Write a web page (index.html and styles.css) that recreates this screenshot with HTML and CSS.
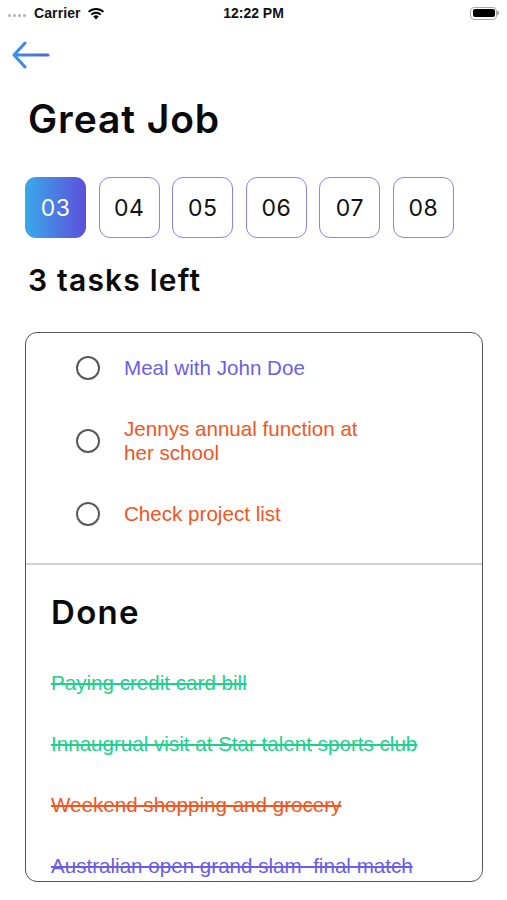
FILE: index.html
```html
<!DOCTYPE html>
<html>
<head>
<meta charset="utf-8">
<link rel="stylesheet" href="styles.css">
</head>
<body>
<div class="screen">
  <div class="status">
    <div class="status-left">
      <span class="dots"><i></i><i></i><i></i><i></i></span>
      <span class="carrier">Carrier</span>
      <svg class="wifi" width="18" height="13" viewBox="0 0 18 13">
        <path d="M9 12.5 L6.3 9.6 A4 4 0 0 1 11.7 9.6 Z" fill="#000"/>
        <path d="M4.3 7.6 A6.8 6.8 0 0 1 13.7 7.6" stroke="#000" stroke-width="2" fill="none"/>
        <path d="M1.6 4.9 A10.6 10.6 0 0 1 16.4 4.9" stroke="#000" stroke-width="2" fill="none"/>
      </svg>
    </div>
    <div class="time">12:22 PM</div>
    <div class="status-right">
      <span class="battery"><span class="battery-fill"></span></span><span class="battery-tip"></span>
    </div>
  </div>

  <div class="nav">
    <svg class="back" width="38" height="28" viewBox="0 0 38 28">
      <defs>
        <linearGradient id="ag" x1="0" y1="0" x2="1" y2="0">
          <stop offset="0" stop-color="#3a93e6"/>
          <stop offset="1" stop-color="#5663d6"/>
        </linearGradient>
      </defs>
      <path d="M13 2 L2 14 L13 26 M2 14 H36" stroke="url(#ag)" stroke-width="3" fill="none" stroke-linecap="round" stroke-linejoin="round"/>
    </svg>
  </div>

  <h1 class="title">Great Job</h1>

  <div class="dates">
    <div class="date active">03</div>
    <div class="date">04</div>
    <div class="date">05</div>
    <div class="date">06</div>
    <div class="date">07</div>
    <div class="date">08</div>
  </div>

  <h2 class="subtitle">3 tasks left</h2>

  <div class="card">
    <div class="todo">
      <div class="task">
        <span class="radio"></span>
        <span class="task-text purple">Meal with John Doe</span>
      </div>
      <div class="task">
        <span class="radio"></span>
        <span class="task-text orange">Jennys annual function at her school</span>
      </div>
      <div class="task">
        <span class="radio"></span>
        <span class="task-text orange">Check project list</span>
      </div>
    </div>
    <div class="done">
      <h3 class="done-title">Done</h3>
      <div class="done-item green">Paying credit card bill</div>
      <div class="done-item green">Innaugrual visit at Star talent sports club</div>
      <div class="done-item orange">Weekend shopping and grocery</div>
      <div class="done-item purple">Australian open grand slam&nbsp; final match</div>
    </div>
  </div>
</div>
</body>
</html>
```

FILE: styles.css
```css
* { box-sizing: border-box; }
html, body { margin: 0; padding: 0; background: #fff; }
.screen {
  width: 507px;
  height: 900px;
  overflow: hidden;
  font-family: "Liberation Sans", Arial, sans-serif;
}

/* status bar */
.status {
  height: 26px;
  display: flex;
  align-items: center;
  justify-content: space-between;
  padding: 0 8px 0 8px;
  position: relative;
}
.status-left { display: flex; align-items: center; gap: 5px; }
.dots { display: flex; gap: 2px; margin-right: 3px; }
.dots i { width: 3px; height: 3px; border-radius: 50%; background: #b0b0b0; display: block; margin-top: 5px; }
.carrier { font-family: "Liberation Sans", Arial, sans-serif; font-size: 14px; font-weight: 700; color: #111; letter-spacing: 0.1px; }
.wifi { margin-left: 1px; }
.time {
  font-size: 14px; font-weight: 700; color: #111;
  position: absolute; left: 0; right: 0; text-align: center; top: 5px;
}
.status-right { display: flex; align-items: center; }
.battery {
  width: 27px; height: 13px; border: 1px solid #aaa; border-radius: 4px; padding: 1.5px;
  display: block;
}
.battery-fill { display: block; width: 100%; height: 100%; background: #000; border-radius: 2px; }
.battery-tip { width: 2px; height: 4px; background: #aaa; border-radius: 0 1px 1px 0; display: block; }

/* nav */
.nav { height: 56px; padding: 15px 0 0 12px; }
.back { display: block; }

.title {
  margin: 14px 0 0 28px;
  font-family: Inter, "Noto Sans", sans-serif;
  font-weight: 600;
  font-size: 39px;
  line-height: 46px;
  color: #0a0a0a;
  letter-spacing: 0.9px;
}

.dates {
  display: flex;
  gap: 12.6px;
  margin: 35px 0 0 25px;
}
.date {
  width: 61px;
  height: 61px;
  border: 1.5px solid #8c82f2;
  border-radius: 11px;
  display: flex;
  align-items: center;
  justify-content: center;
  font-family: Inter, "Noto Sans", sans-serif;
  font-size: 23px;
  letter-spacing: 0.5px;
  color: #111;
}
.date.active {
  border: none;
  background: linear-gradient(90deg, #3aa9ea 0%, #5c4fdb 100%);
  color: #fff;
}

.subtitle {
  margin: 24px 0 0 28px;
  font-family: Inter, "Noto Sans", sans-serif;
  font-weight: 600;
  font-size: 30px;
  line-height: 36px;
  letter-spacing: 1.2px;
  color: #0a0a0a;
}

.card {
  margin: 34px 0 0 25px;
  width: 458px;
  height: 550px;
  border: 1.5px solid #555;
  border-radius: 12px;
  overflow: hidden;
}
.todo {
  padding: 23px 0 37px 50px;
  display: flex;
  flex-direction: column;
  gap: 37px;
  border-bottom: 2px solid #d2d2d2;
}
.task { display: flex; align-items: center; gap: 24px; }
.radio {
  width: 24px; height: 24px; border-radius: 50%;
  border: 2.6px solid #595959; flex: none;
}
.task-text { font-size: 20.6px; line-height: 24px; width: 250px; }

.purple { color: #6a5ee6; }
.orange { color: #f2561f; }
.green { color: #1fcf8d; }

.done { padding: 27px 0 0 25px; }
.done-title {
  margin: 0;
  font-family: Inter, "Noto Sans", sans-serif;
  font-weight: 600;
  font-size: 33px;
  line-height: 40px;
  letter-spacing: 1.3px;
  color: #0a0a0a;
}
.done-item {
  font-size: 20.6px;
  line-height: 24px;
  text-decoration: line-through;
  margin-top: 37px;
  white-space: nowrap;
}
.done-title + .done-item { margin-top: 39px; }
```
